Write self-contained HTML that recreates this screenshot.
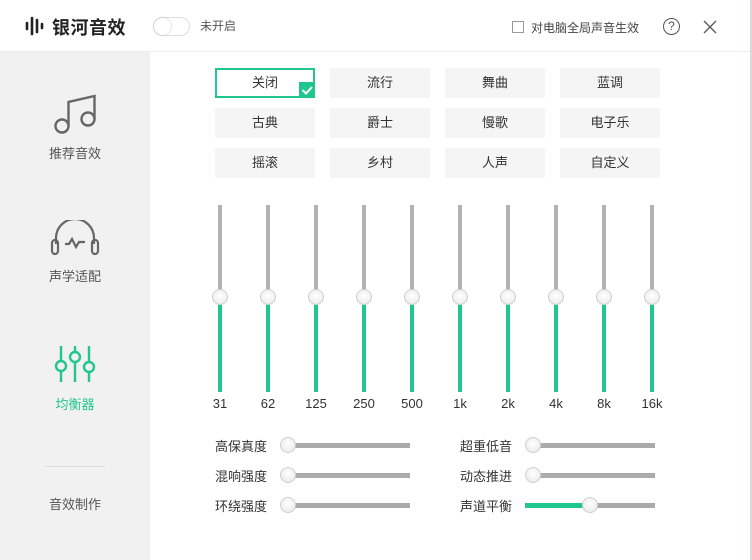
<!DOCTYPE html>
<html><head><meta charset="utf-8"><style>
*{margin:0;padding:0;box-sizing:border-box}
body{width:752px;height:560px;overflow:hidden;background:#fff;font-family:"Liberation Sans","Noto Sans CJK SC",sans-serif;position:relative;color:#333}
.a{position:absolute}
.side{left:0;top:52px;width:150px;height:508px;background:#f1f1f1}
.nav{position:absolute;width:150px;text-align:center;font-size:13px;color:#555;left:0}
.btn{position:absolute;width:100px;height:30px;background:#f5f5f5;font-size:13px;text-align:center;line-height:30px;color:#333}
.trk{position:absolute;width:4px;background:#b3b3b3;top:205px;height:187px}
.grn{position:absolute;width:4px;background:#20c68e;top:298px;height:94px}
.knob{position:absolute;width:16px;height:16px;border-radius:50%;background:radial-gradient(circle at 50% 40%,#fff,#e6e6e6);border:1px solid #cfcfcf}
.lbl{position:absolute;font-size:13px;color:#333;width:40px;text-align:center;top:396px}
.hl{position:absolute;height:5px;background:#ababab}
.sl{position:absolute;font-size:13px;color:#333}
</style></head><body>
<div class="a" style="left:750px;top:0;width:2px;height:560px;background:#d8dbe0"></div>
<svg class="a" style="left:25px;top:15px" width="20" height="22" viewBox="0 0 20 22"><g stroke="#222" stroke-width="2.6" stroke-linecap="round"><line x1="2" y1="8" x2="2" y2="14"/><line x1="7" y1="3" x2="7" y2="19"/><line x1="12" y1="5" x2="12" y2="17"/><line x1="17" y1="9" x2="17" y2="13"/></g></svg>
<div class="a" style="left:52px;top:14px;font-size:18px;font-weight:bold;color:#222;letter-spacing:0.5px">银河音效</div>
<div class="a" style="left:153px;top:17px;width:37px;height:19px;border:1px solid #ddd;border-radius:10px;background:#fff"></div>
<div class="a" style="left:154px;top:18px;width:17px;height:17px;border-radius:50%;background:#fff;box-shadow:0 0 2px #bbb"></div>
<div class="a" style="left:200px;top:17px;font-size:12px;color:#555">未开启</div>
<div class="a" style="left:512px;top:21px;width:12px;height:12px;border:1px solid #999;background:#fff"></div>
<div class="a" style="left:531px;top:19px;font-size:12px;color:#444">对电脑全局声音生效</div>
<div class="a" style="left:663px;top:18px;width:17px;height:17px;border:1.3px solid #555;border-radius:50%;font-size:12px;text-align:center;line-height:15px;color:#555">?</div>
<svg class="a" style="left:703px;top:20px" width="14" height="14"><path d="M1 1L13 13M13 1L1 13" stroke="#555" stroke-width="1.3"/></svg>
<div class="a" style="left:0;top:51px;width:750px;height:1px;background:#ececec"></div>
<div class="a side"></div>
<svg class="a" style="left:52px;top:92px" width="46" height="44" viewBox="0 0 46 44"><g fill="none" stroke="#666" stroke-width="2.4"><circle cx="10" cy="34" r="6.5"/><circle cx="36" cy="27" r="6.5"/><path d="M16.5 34V10L42.5 4V27"/></g></svg>
<div class="nav" style="top:143px">推荐音效</div>
<svg class="a" style="left:50px;top:220px" width="50" height="36" viewBox="0 0 50 36"><g fill="none" stroke="#666" stroke-width="2.2"><path d="M6 24V18A19 19 0 0 1 44 18V24"/><rect x="2" y="20" width="6" height="14" rx="3"/><rect x="42" y="20" width="6" height="14" rx="3"/><path d="M15 24H19L22 19L26 27L29 22H35"/></g></svg>
<div class="nav" style="top:266px">声学适配</div>
<svg class="a" style="left:52px;top:344px" width="46" height="40" viewBox="0 0 46 40"><g fill="none" stroke="#20c68e" stroke-width="2.4"><line x1="9" y1="2" x2="9" y2="38"/><line x1="23" y1="2" x2="23" y2="38"/><line x1="37" y1="2" x2="37" y2="38"/><circle cx="9" cy="22" r="5" fill="#f1f1f1"/><circle cx="23" cy="13" r="5" fill="#f1f1f1"/><circle cx="37" cy="23" r="5" fill="#f1f1f1"/></g></svg>
<div class="nav" style="top:394px;color:#20c68e">均衡器</div>
<div class="a" style="left:45px;top:466px;width:60px;height:1px;background:#ddd"></div>
<div class="nav" style="top:494px">音效制作</div>
<div class="btn" style="left:215px;top:68px;border:2px solid #20c68e;background:#fff;line-height:26px">关闭</div>
<div class="a" style="left:299px;top:82px;width:16px;height:16px;background:#20c68e"></div>
<svg class="a" style="left:300px;top:83px" width="14" height="14"><path d="M2.5 7L6 10.5L12 4" fill="none" stroke="#fff" stroke-width="2"/></svg>
<div class="btn" style="left:330px;top:68px">流行</div>
<div class="btn" style="left:445px;top:68px">舞曲</div>
<div class="btn" style="left:560px;top:68px">蓝调</div>
<div class="btn" style="left:215px;top:108px">古典</div>
<div class="btn" style="left:330px;top:108px">爵士</div>
<div class="btn" style="left:445px;top:108px">慢歌</div>
<div class="btn" style="left:560px;top:108px">电子乐</div>
<div class="btn" style="left:215px;top:148px">摇滚</div>
<div class="btn" style="left:330px;top:148px">乡村</div>
<div class="btn" style="left:445px;top:148px">人声</div>
<div class="btn" style="left:560px;top:148px">自定义</div>
<div id="eq"></div>
<script>
var f=["31","62","125","250","500","1k","2k","4k","8k","16k"],h="";
for(var i=0;i<10;i++){var x=220+i*48;
h+='<div class="trk" style="left:'+(x-2)+'px"></div><div class="grn" style="left:'+(x-2)+'px"></div><div class="knob" style="left:'+(x-8)+'px;top:289px"></div><div class="lbl" style="left:'+(x-20)+'px">'+f[i]+'</div>';}
document.getElementById('eq').innerHTML=h;
</script>
<div class="sl" style="left:215px;top:436px">高保真度</div>
<div class="sl" style="left:215px;top:466px">混响强度</div>
<div class="sl" style="left:215px;top:496px">环绕强度</div>
<div class="hl" style="left:287px;top:443px;width:123px"></div>
<div class="hl" style="left:287px;top:473px;width:123px"></div>
<div class="hl" style="left:287px;top:503px;width:123px"></div>
<div class="knob" style="left:280px;top:437px"></div>
<div class="knob" style="left:280px;top:467px"></div>
<div class="knob" style="left:280px;top:497px"></div>
<div class="sl" style="left:460px;top:436px">超重低音</div>
<div class="sl" style="left:460px;top:466px">动态推进</div>
<div class="sl" style="left:460px;top:496px">声道平衡</div>
<div class="hl" style="left:532px;top:443px;width:123px"></div>
<div class="hl" style="left:532px;top:473px;width:123px"></div>
<div class="hl" style="left:525px;top:503px;width:130px"></div>
<div class="hl" style="left:525px;top:503px;width:65px;background:#20c68e"></div>
<div class="knob" style="left:525px;top:437px"></div>
<div class="knob" style="left:525px;top:467px"></div>
<div class="knob" style="left:582px;top:497px"></div>
</body></html>
